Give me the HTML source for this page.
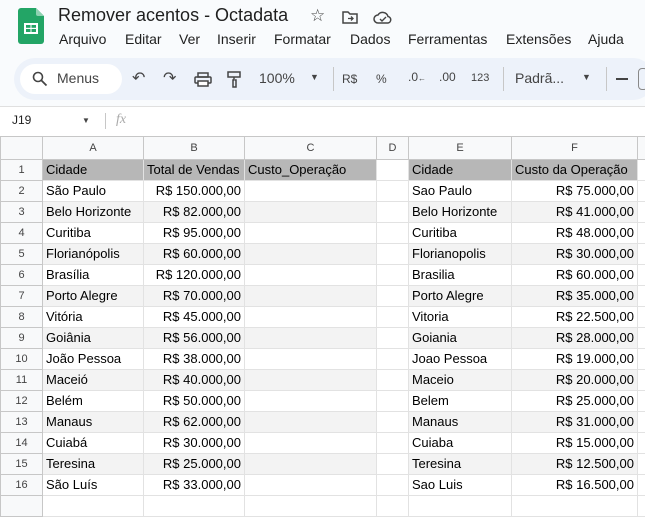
<!DOCTYPE html>
<html><head><meta charset="utf-8"><style>
*{margin:0;padding:0;box-sizing:border-box}
body{width:645px;height:501px;overflow:hidden;background:#f9fbfd;font-family:"Liberation Sans",Arial,sans-serif;position:relative}
.abs{position:absolute}
.title{left:58px;top:5px;font-size:18px;color:#1f1f1f}
.menu{top:31px;font-size:14px;color:#1f1f1f}
.tb{left:14px;top:58px;width:640px;height:42px;background:#edf2fa;border-radius:21px}
.srch{left:20px;top:64px;width:102px;height:30px;background:#fff;border-radius:15px}
.ti{top:70px;font-size:14px;color:#444}
.fb{left:0;top:106px;width:645px;height:30px;background:#fff;border-top:1px solid #e0e0e0}
table{position:absolute;left:0;top:136px;width:657px;border-collapse:collapse;table-layout:fixed;background:#fff;font-size:13px;color:#000}
td{height:21px;border:1px solid #e2e2e2;padding:0 3px;white-space:nowrap;overflow:hidden;line-height:20px}
tr.h td{height:23px;background:#f8f9fa;color:#444;font-size:11px;text-align:center;border-color:#c7c7c7}
td.rh{background:#f8f9fa;color:#444;font-size:11px;text-align:center;border-color:#c7c7c7}
tr.top td.c{background:#b7b7b7}
tr.g td.c{background:#f3f3f3}
.r{text-align:right}
</style></head><body>
<svg class="abs" style="left:18px;top:8px" width="26" height="36" viewBox="0 0 26 36"><path d="M3 0h15l8 8v25a3 3 0 0 1-3 3H3a3 3 0 0 1-3-3V3a3 3 0 0 1 3-3z" fill="#23a566"/><path d="M18 0l8 8h-6a2 2 0 0 1-2-2z" fill="#8ed1b1"/><rect x="6" y="15" width="14" height="11" fill="#fff"/><rect x="8" y="17" width="4.5" height="2.8" fill="#23a566"/><rect x="13.5" y="17" width="4.5" height="2.8" fill="#23a566"/><rect x="8" y="21" width="4.5" height="3" fill="#23a566"/><rect x="13.5" y="21" width="4.5" height="3" fill="#23a566"/></svg>
<div class="abs title">Remover acentos - Octadata</div>
<div class="abs" style="left:310px;top:6px;font-size:17px;color:#444">☆</div>
<svg class="abs" style="left:342px;top:10px" width="16" height="14"><path d="M1 2h5l2 2h7v9H1z" fill="none" stroke="#444" stroke-width="1.5"/><path d="M6 8.5h5M9 6.5l2 2-2 2" stroke="#444" stroke-width="1.3" fill="none"/></svg>
<svg class="abs" style="left:373px;top:10px" width="20" height="14"><path d="M5 13a4 4 0 0 1 0-8 5.5 5.5 0 0 1 10 1.5 3.3 3.3 0 0 1 0 6.5z" fill="none" stroke="#444" stroke-width="1.5"/><path d="M7 9l2 2 4-4" stroke="#444" stroke-width="1.4" fill="none"/></svg>
<div class="abs menu" style="left:59px">Arquivo</div>
<div class="abs menu" style="left:125px">Editar</div>
<div class="abs menu" style="left:179px">Ver</div>
<div class="abs menu" style="left:217px">Inserir</div>
<div class="abs menu" style="left:274px">Formatar</div>
<div class="abs menu" style="left:350px">Dados</div>
<div class="abs menu" style="left:408px">Ferramentas</div>
<div class="abs menu" style="left:506px">Extensões</div>
<div class="abs menu" style="left:588px">Ajuda</div>
<div class="abs tb"></div>
<div class="abs srch"></div>
<svg class="abs" style="left:32px;top:71px" width="16" height="16"><circle cx="6" cy="6" r="4.5" fill="none" stroke="#444" stroke-width="1.6"/><path d="M9.5 9.5l5 5" stroke="#444" stroke-width="1.8"/></svg>
<div class="abs ti" style="left:57px">Menus</div>
<div class="abs ti" style="left:132px;top:68px;font-size:16px">↶</div>
<div class="abs ti" style="left:163px;top:68px;font-size:16px">↷</div>
<svg class="abs" style="left:194px;top:72px" width="18" height="15"><rect x="4" y="1" width="10" height="4" fill="none" stroke="#444" stroke-width="1.5"/><rect x="1" y="5" width="16" height="6" rx="1" fill="none" stroke="#444" stroke-width="1.5"/><rect x="4" y="9" width="10" height="5" fill="#fff" stroke="#444" stroke-width="1.5"/></svg>
<svg class="abs" style="left:227px;top:71px" width="14" height="17"><rect x="1" y="1" width="12" height="5" fill="none" stroke="#444" stroke-width="1.5"/><path d="M7 6v3h-1v7h3v-7H8" fill="none" stroke="#444" stroke-width="1.5"/></svg>
<div class="abs ti" style="left:259px">100%</div>
<div class="abs ti" style="left:310px;top:72px;font-size:9px">▼</div>
<div class="abs" style="left:333px;top:67px;width:1px;height:24px;background:#c7c7c7"></div>
<div class="abs ti" style="left:342px;font-size:12px;top:72px">R$</div>
<div class="abs ti" style="left:376px;font-size:12px;top:72px">%</div>
<div class="abs ti" style="left:408px;font-size:12px;top:70px">.0<span style="font-size:8px">←</span></div>
<div class="abs ti" style="left:439px;font-size:12px;top:70px">.00</div>
<div class="abs ti" style="left:471px;font-size:11px;top:72px">123</div>
<div class="abs" style="left:503px;top:67px;width:1px;height:24px;background:#c7c7c7"></div>
<div class="abs ti" style="left:515px">Padrã...</div>
<div class="abs ti" style="left:582px;top:72px;font-size:9px">▼</div>
<div class="abs" style="left:606px;top:67px;width:1px;height:24px;background:#c7c7c7"></div>
<div class="abs" style="left:616px;top:78px;width:12px;height:2px;background:#444"></div>
<div class="abs" style="left:638px;top:68px;width:10px;height:22px;border:1px solid #888;border-radius:4px"></div>
<div class="abs fb"></div>
<div class="abs" style="left:12px;top:113px;font-size:12px;color:#1f1f1f">J19</div>
<div class="abs" style="left:82px;top:116px;font-size:8px;color:#444">▼</div>
<div class="abs" style="left:105px;top:113px;width:1px;height:16px;background:#c7c7c7"></div>
<div class="abs" style="left:116px;top:112px;font-size:14px;color:#aaa;font-style:italic;font-family:'Liberation Serif',serif">fx</div>
<table>
<colgroup><col style="width:42px"><col style="width:101px"><col style="width:101px"><col style="width:132px"><col style="width:32px"><col style="width:103px"><col style="width:126px"><col style="width:20px"></colgroup>
<tr class="h"><td></td><td>A</td><td>B</td><td>C</td><td>D</td><td>E</td><td>F</td><td></td></tr>
<tr class="top"><td class="rh">1</td><td class="c">Cidade</td><td class="c">Total de Vendas</td><td class="c">Custo_Operação</td><td></td><td class="c">Cidade</td><td class="c">Custo da Operação</td><td></td></tr>
<tr><td class="rh">2</td><td class="c">São Paulo</td><td class="c r">R$ 150.000,00</td><td class="c"></td><td></td><td class="c">Sao Paulo</td><td class="c r">R$ 75.000,00</td><td></td></tr>
<tr class="g"><td class="rh">3</td><td class="c">Belo Horizonte</td><td class="c r">R$ 82.000,00</td><td class="c"></td><td></td><td class="c">Belo Horizonte</td><td class="c r">R$ 41.000,00</td><td></td></tr>
<tr><td class="rh">4</td><td class="c">Curitiba</td><td class="c r">R$ 95.000,00</td><td class="c"></td><td></td><td class="c">Curitiba</td><td class="c r">R$ 48.000,00</td><td></td></tr>
<tr class="g"><td class="rh">5</td><td class="c">Florianópolis</td><td class="c r">R$ 60.000,00</td><td class="c"></td><td></td><td class="c">Florianopolis</td><td class="c r">R$ 30.000,00</td><td></td></tr>
<tr><td class="rh">6</td><td class="c">Brasília</td><td class="c r">R$ 120.000,00</td><td class="c"></td><td></td><td class="c">Brasilia</td><td class="c r">R$ 60.000,00</td><td></td></tr>
<tr class="g"><td class="rh">7</td><td class="c">Porto Alegre</td><td class="c r">R$ 70.000,00</td><td class="c"></td><td></td><td class="c">Porto Alegre</td><td class="c r">R$ 35.000,00</td><td></td></tr>
<tr><td class="rh">8</td><td class="c">Vitória</td><td class="c r">R$ 45.000,00</td><td class="c"></td><td></td><td class="c">Vitoria</td><td class="c r">R$ 22.500,00</td><td></td></tr>
<tr class="g"><td class="rh">9</td><td class="c">Goiânia</td><td class="c r">R$ 56.000,00</td><td class="c"></td><td></td><td class="c">Goiania</td><td class="c r">R$ 28.000,00</td><td></td></tr>
<tr><td class="rh">10</td><td class="c">João Pessoa</td><td class="c r">R$ 38.000,00</td><td class="c"></td><td></td><td class="c">Joao Pessoa</td><td class="c r">R$ 19.000,00</td><td></td></tr>
<tr class="g"><td class="rh">11</td><td class="c">Maceió</td><td class="c r">R$ 40.000,00</td><td class="c"></td><td></td><td class="c">Maceio</td><td class="c r">R$ 20.000,00</td><td></td></tr>
<tr><td class="rh">12</td><td class="c">Belém</td><td class="c r">R$ 50.000,00</td><td class="c"></td><td></td><td class="c">Belem</td><td class="c r">R$ 25.000,00</td><td></td></tr>
<tr class="g"><td class="rh">13</td><td class="c">Manaus</td><td class="c r">R$ 62.000,00</td><td class="c"></td><td></td><td class="c">Manaus</td><td class="c r">R$ 31.000,00</td><td></td></tr>
<tr><td class="rh">14</td><td class="c">Cuiabá</td><td class="c r">R$ 30.000,00</td><td class="c"></td><td></td><td class="c">Cuiaba</td><td class="c r">R$ 15.000,00</td><td></td></tr>
<tr class="g"><td class="rh">15</td><td class="c">Teresina</td><td class="c r">R$ 25.000,00</td><td class="c"></td><td></td><td class="c">Teresina</td><td class="c r">R$ 12.500,00</td><td></td></tr>
<tr><td class="rh">16</td><td class="c">São Luís</td><td class="c r">R$ 33.000,00</td><td class="c"></td><td></td><td class="c">Sao Luis</td><td class="c r">R$ 16.500,00</td><td></td></tr>
<tr><td class="rh"></td><td></td><td></td><td></td><td></td><td></td><td></td><td></td></tr>
</table>
</body></html>
